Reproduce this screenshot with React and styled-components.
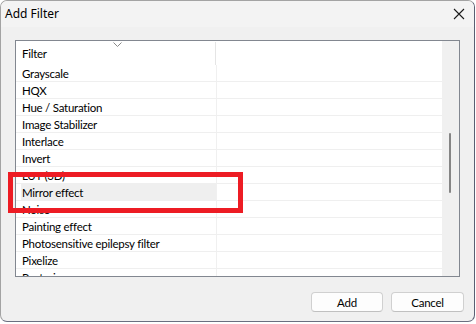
import React from 'react'
import styled, { createGlobalStyle } from 'styled-components'

const filters = [
    'Grayscale',
    'HQX',
    'Hue / Saturation',
    'Image Stabilizer',
    'Interlace',
    'Invert',
    'LUT (3D)',
    'Mirror effect',
    'Noise',
    'Painting effect',
    'Photosensitive epilepsy filter',
    'Pixelize',
    'Posterize',
    'Radial blur',
]

const GlobalStyle = createGlobalStyle`
    html, body {
        margin: 0;
        padding: 0;
        background: #ffffff;
    }
    body {
        font-family: Lato, 'Liberation Sans', sans-serif;
        font-size: 11.5px;
        letter-spacing: -0.25px;
        color: #000;
    }
`

function App() {
    return (
        <>
            <GlobalStyle />
            <Window>
                <TitleBar>
                    <Title>Add Filter</Title>
                    <CloseButton>
                        <svg width="12" height="12" viewBox="0 0 12 12">
                            <path d="M1 1 L11 11 M11 1 L1 11" stroke="#1b1b1b" strokeWidth="1.1" fill="none" />
                        </svg>
                    </CloseButton>
                </TitleBar>
                <Body>
                    <ListView>
                        <Content>
                            <Header>
                                <HeaderCell>
                                    Filter
                                    <SortArrow>
                                        <svg width="9" height="5" viewBox="0 0 9 5">
                                            <path d="M0.5 0.5 L4.5 4.5 L8.5 0.5" stroke="#8a8a8a" strokeWidth="1" fill="none" />
                                        </svg>
                                    </SortArrow>
                                </HeaderCell>
                                <HeaderRest />
                            </Header>
                            {filters.map((name) => (
                                <Row key={name}>
                                    <NameCell $selected={name === 'Mirror effect'}>{name}</NameCell>
                                    <RestCell />
                                </Row>
                            ))}
                        </Content>
                        <ScrollBar>
                            <Thumb />
                        </ScrollBar>
                    </ListView>
                    <Buttons>
                        <Button>Add</Button>
                        <Button>Cancel</Button>
                    </Buttons>
                </Body>
                <Highlight />
            </Window>
        </>
    )
}

const Window = styled.div`
    position: relative;
    width: 473px;
    height: 320px;
    border: 1px solid #a3a3a3;
    border-right-color: #5a5f73;
    border-bottom-color: #6a6f80;
    border-radius: 7px;
    background: #f0f0f0;
    overflow: hidden;
    display: flex;
    flex-direction: column;
`

const TitleBar = styled.div`
    height: 26px;
    flex: none;
    display: flex;
    align-items: center;
    justify-content: space-between;
    background: #f3f3f3;
    padding-left: 4px;
`

const Title = styled.div`
    font-family: 'Noto Sans', sans-serif;
    font-size: 12px;
    letter-spacing: 0;
    margin-top: -1px;
`

const CloseButton = styled.div`
    width: 30px;
    height: 26px;
    display: flex;
    align-items: center;
    justify-content: center;
`

const Body = styled.div`
    flex: 1;
    display: flex;
    flex-direction: column;
    padding: 13px 10px 0 14px;
`

const ListView = styled.div`
    width: 443px;
    height: 235px;
    border: 1px solid #828790;
    background: #ffffff;
    display: flex;
    overflow: hidden;
`

const Content = styled.div`
    flex: 1;
    overflow: hidden;
`

const Header = styled.div`
    height: 24px;
    display: flex;
`

const HeaderCell = styled.div`
    position: relative;
    width: 200px;
    border-right: 1px solid #e5e5e5;
    margin-top: 1px;
    padding-left: 6px;
    display: flex;
    align-items: center;
    box-sizing: border-box;
`

const SortArrow = styled.span`
    position: absolute;
    top: 0px;
    left: 97px;
    line-height: 0;
`

const HeaderRest = styled.div`
    flex: 1;
`

const Row = styled.div`
    height: 16px;
    display: flex;
    border-bottom: 1px solid #efefef;
`

const NameCell = styled.div`
    width: 201px;
    box-sizing: border-box;
    border-right: 1px solid #f0f0f0;
    padding-left: 6px;
    padding-top: 1px;
    display: flex;
    align-items: center;
    white-space: nowrap;
    background: ${(p) => (p.$selected ? 'linear-gradient(to right, #fff 5px, #efefef 5px)' : 'transparent')};
`

const RestCell = styled.div`
    flex: 1;
`

const ScrollBar = styled.div`
    width: 17px;
    flex: none;
    background: #f0f0f0;
    position: relative;
`

const Thumb = styled.div`
    position: absolute;
    left: 7px;
    top: 92px;
    width: 2px;
    height: 60px;
    border-radius: 1px;
    background: #858585;
`

const Buttons = styled.div`
    display: flex;
    justify-content: flex-end;
    gap: 8px;
    margin-top: 15px;
`

const Button = styled.div`
    width: 70px;
    height: 18px;
    border: 1px solid #d0d0d0;
    border-bottom-color: #c0c0c0;
    border-radius: 4px;
    background: #fdfdfd;
    display: flex;
    align-items: center;
    justify-content: center;
    &:last-child {
        width: 71px;
    }
`

const Highlight = styled.div`
    position: absolute;
    left: 7px;
    top: 171px;
    width: 225px;
    height: 31px;
    border: 5px solid #ed1c24;
`

export default App
